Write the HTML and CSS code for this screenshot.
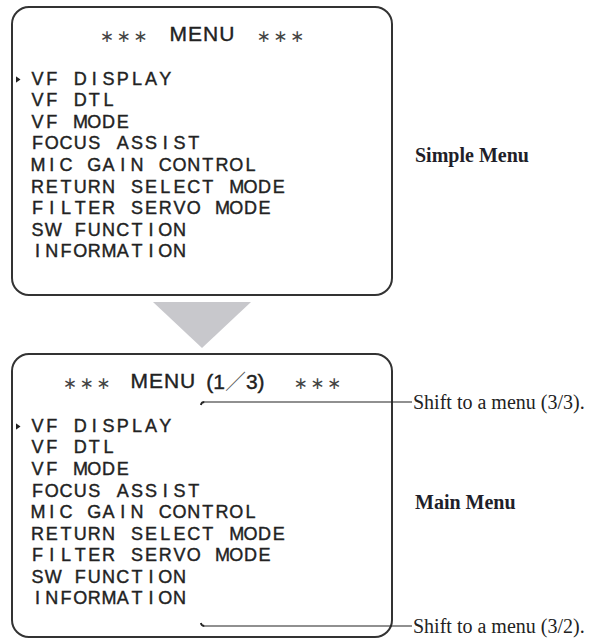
FILE: index.html
```html
<!DOCTYPE html>
<html>
<head>
    <title>Menu Screens</title>
    <link rel="stylesheet" href="styles.css">
</head>
<body>
    <div class="page">
        <section class="row">
            <div class="screen screen-simple">
                <div class="title">
                    <span class="stars">∗∗∗</span>
                    <span class="word">MENU</span>
                    <span class="stars">∗∗∗</span>
                </div>
                <ul class="items">
                    <li class="current">VF DISPLAY</li>
                    <li>VF DTL</li>
                    <li>VF MODE</li>
                    <li>FOCUS ASSIST</li>
                    <li>MIC GAIN CONTROL</li>
                    <li>RETURN SELECT MODE</li>
                    <li>FILTER SERVO MODE</li>
                    <li>SW FUNCTION</li>
                    <li>INFORMATION</li>
                </ul>
            </div>
            <div class="label label-simple">Simple Menu</div>
        </section>

        <div class="arrow"></div>

        <section class="row">
            <div class="screen screen-main">
                <div class="title title-main">
                    <span class="stars">∗∗∗</span>
                    <span class="word">MENU</span>
                    <span class="fraction">(1<span class="slash">／</span>3)</span>
                    <span class="stars">∗∗∗</span>
                </div>
                <ul class="items">
                    <li class="current">VF DISPLAY</li>
                    <li>VF DTL</li>
                    <li>VF MODE</li>
                    <li>FOCUS ASSIST</li>
                    <li>MIC GAIN CONTROL</li>
                    <li>RETURN SELECT MODE</li>
                    <li>FILTER SERVO MODE</li>
                    <li>SW FUNCTION</li>
                    <li>INFORMATION</li>
                </ul>
            </div>
            <div class="label label-main">Main Menu</div>

            <!-- callouts drawn over the screen edge -->
            <div class="leader leader-top">
                <svg width="213" height="22" viewBox="0 0 213 22">
                    <path d="M212 11 H4.5" stroke="#222" stroke-width="1.2" fill="none"/>
                    <path d="M4.5 11 Q1.5 11 0.8 14" stroke="#222" stroke-width="1.8" fill="none"/>
                </svg>
                <span>Shift to a menu (3/3).</span>
            </div>
            <div class="leader leader-bottom">
                <svg width="213" height="22" viewBox="0 0 213 22">
                    <path d="M212 11 H4.5" stroke="#222" stroke-width="1.2" fill="none"/>
                    <path d="M4.5 11 Q1.5 11 0.8 8" stroke="#222" stroke-width="1.8" fill="none"/>
                </svg>
                <span>Shift to a menu (3/2).</span>
            </div>
        </section>
    </div>

    <script src="script.js"></script>
</body>
</html>
```

FILE: styles.css
```css
body {
    margin: 0;
    background-color: #fff;
    font-family: "Liberation Sans", Arial, sans-serif;
    color: #222;
}
.page {
    padding: 6px 0 0 11px;
}
.row {
    display: flex;
    position: relative;
}
.screen {
    flex: none;
    width: 382px;
    box-sizing: border-box;
    border: 2.5px solid #333;
    border-radius: 18px;
    padding: 13.5px 0 31px;
}
.screen-main {
    padding-bottom: 26px;
}
.title {
    display: flex;
    justify-content: center;
    align-items: center;
    gap: 22px;
    height: 24px;
    line-height: 24px;
    font-size: 21px;
    margin-bottom: 23.2px;
}
.title-main {
    gap: 20px;
}
.word,
.fraction {
    -webkit-text-stroke: 0.4px #222;
}
.word {
    letter-spacing: 1px;
    margin-right: -1px;
}
.stars {
    font-family: "DejaVu Sans", sans-serif;
    font-size: 17px;
    letter-spacing: 2.5px;
    margin-right: -2.5px;
    color: #444;
    position: relative;
    top: 2px;
}
.fraction {
    margin-left: -9px;
    margin-right: 9px;
}
.slash {
    font-family: "Noto Sans CJK JP", sans-serif;
    font-weight: 300;
    color: #555;
    -webkit-text-stroke: 0;
}
.items {
    list-style: none;
    margin: 0;
    padding: 0;
    font-size: 18px;
    -webkit-text-stroke: 0.4px #222;
}
.items li {
    display: flex;
    align-items: center;
    height: 21.6px;
    line-height: 21.6px;
    white-space: nowrap;
}
.items li::before {
    content: '';
    flex: none;
    width: 5px;
    height: 7px;
    margin: 0 10px 0 2.5px;
}
.items li.current::before {
    background-color: #222;
    clip-path: polygon(0 0, 100% 50%, 0 100%);
}
.cell {
    flex: none;
    width: 14.2px;
    text-align: center;
}
.arrow {
    width: 98px;
    height: 46px;
    margin: 6px 0 5px 142px;
    background-color: #c8c8cc;
    clip-path: polygon(0 0, 100% 0, 50% 100%);
}
.label {
    align-self: center;
    margin-left: 22px;
    font-family: "Liberation Serif", "Times New Roman", serif;
    font-weight: bold;
    font-size: 20px;
    color: #1f1f2a;
}
.label-simple {
    margin-top: 9px;
}
.label-main {
    margin-top: 14px;
}
.leader {
    position: absolute;
    left: 189px;
    display: flex;
    align-items: center;
    height: 22px;
    font-family: "Liberation Serif", "Times New Roman", serif;
    font-size: 20px;
    color: #222;
    white-space: nowrap;
}
.leader svg {
    flex: none;
}
.leader-top {
    top: 38px;
}
.leader-bottom {
    top: 262px;
}
```

FILE: script.js
```js
// split each menu line into fixed cells, like the on-screen display font
document.querySelectorAll('.items li').forEach(function (item) {
    var text = item.textContent;
    item.textContent = '';
    for (var i = 0; i < text.length; i++) {
        var cell = document.createElement('span');
        cell.className = 'cell';
        cell.textContent = text[i] === ' ' ? '\u00a0' : text[i];
        item.appendChild(cell);
    }
});
```
